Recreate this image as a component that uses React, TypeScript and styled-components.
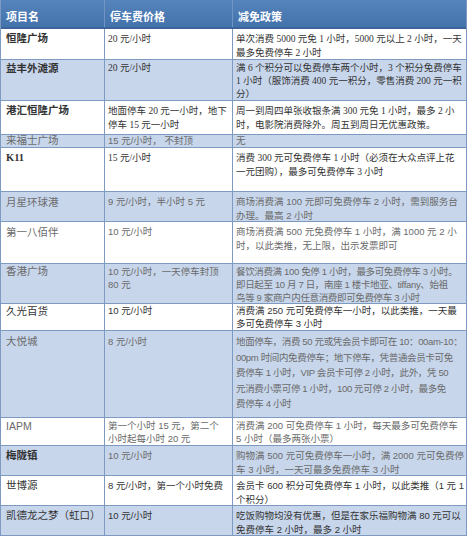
import styled, { createGlobalStyle } from "styled-components"

const GlobalStyle = createGlobalStyle`
  body {
    margin: 0;
    background: #ffffff;
  }
  * {
    box-sizing: border-box;
  }
`

const Table = styled.div`
  width: 467px;
  border-left: 1px solid #7f9ac0;
  border-right: 1px solid #7f9ac0;
  font-size: 9.5px;
  color: #555;
`

const HeaderRow = styled.div`
  display: grid;
  grid-template-columns: 104px 128px 1fr;
  height: 29px;
  background: linear-gradient(#5584bd, #4472ab);
  border-bottom: 2px solid #3c6498;
`

const HeadCell = styled.div`
  padding: 8px 5px 0;
  color: #ffffff;
  font-family: "Noto Sans CJK SC", sans-serif;
  font-weight: 700;
  font-size: 11px;
  border-right: 1px solid #6f95c4;

  &:last-child {
    border-right: none;
  }
`

const Row = styled.div<{ $h: number; $alt: boolean }>`
  display: grid;
  grid-template-columns: 104px 128px 1fr;
  height: ${p => p.$h}px;
  background: ${p => (p.$alt ? "#c7d6eb" : "#ffffff")};
  border-bottom: 1px solid #7f9ac0;
`

const Cell = styled.div<{ $serif: boolean; $lh: number; $dark: boolean; $pt: number; $tight?: boolean }>`
  padding: ${p => p.$pt}px 2px 0 3px;
  overflow: hidden;
  white-space: nowrap;
  line-height: ${p => p.$lh}px;
  letter-spacing: ${p => (p.$tight ? "-0.35px" : "0")};
  color: ${p => (p.$dark ? "#333" : "#6a6a6a")};
  font-family: ${p =>
    p.$serif
      ? `"Liberation Serif", "Noto Sans CJK SC", serif`
      : `"Liberation Sans", "Noto Sans CJK SC", sans-serif`};
  border-right: 1px solid #7f9ac0;

  &:last-child {
    border-right: none;
  }
`

const Name = styled(Cell)<{ $bold: boolean }>`
  padding-left: 5px;
  font-size: 10.5px;
  font-weight: ${p => (p.$bold ? 700 : 400)};
`

interface IPark {
  name: string
  price: string[]
  policy: string[]
  h: number
  serif?: boolean
  bold?: boolean
  dark?: boolean
  tight?: boolean
  lh?: number
  pt?: number
}

const parks: IPark[] = [
  {
    name: "恒隆广场",
    price: ["20 元/小时"],
    policy: ["单次消费 5000 元免 1 小时，5000 元以上 2 小时，一天", "最多免费停车 2 小时"],
    h: 31,
    serif: true,
    bold: true,
    dark: true,
  },
  {
    name: "益丰外滩源",
    price: ["20 元/小时"],
    policy: [
      "满 6 个积分可以免费停车两个小时，3 个积分免费停车",
      "1 小时（服饰消费 400 元一积分，零售消费 200 元一积",
      "分）",
    ],
    h: 41,
    serif: true,
    bold: true,
    dark: true,
    lh: 13,
    pt: 2,
  },
  {
    name: "港汇恒隆广场",
    price: ["地面停车 20 元一小时，地下", "停车 15 元一小时"],
    policy: ["周一到周四单张收银条满 300 元免 1 小时，最多 2 小", "时，电影院消费除外。周五到周日无优惠政策。"],
    h: 34,
    serif: true,
    bold: true,
    dark: true,
  },
  {
    name: "来福士广场",
    price: ["15 元/小时， 不封顶"],
    policy: ["无"],
    h: 13,
    lh: 11,
    pt: 0,
  },
  {
    name: "K11",
    price: ["15 元/小时"],
    policy: ["消费 300 元可免费停车 1 小时（必须在大众点评上花", "一元团购），最多可免费停车 3 小时"],
    h: 44,
    serif: true,
    bold: true,
    dark: true,
  },
  {
    name: "月星环球港",
    price: ["9 元/小时，半小时 5 元"],
    policy: ["商场消费满 100 元即可免费停车 2 小时，需到服务台", "办理。最高 2 小时"],
    h: 30,
  },
  {
    name: "第一八佰伴",
    price: ["10 元/小时"],
    policy: ["商场消费满 500 元免费停车 1 小时，满 1000 元 2 小", "时，以此类推，无上限，出示发票即可"],
    h: 42,
  },
  {
    name: "香港广场",
    price: ["10 元/小时，一天停车封顶", "80 元"],
    policy: [
      "餐饮消费满 100 免停 1 小时，最多可免费停车 3 小时。",
      "即日起至 10 月 7 日，南座 1 楼卡地亚、tiffany、始祖",
      "鸟等 9 家商户内任意消费即可免费停车 3 小时",
    ],
    h: 40,
    lh: 13,
    pt: 1,
    tight: true,
  },
  {
    name: "久光百货",
    price: ["10 元/小时"],
    policy: ["消费满 250 元可免费停车一小时，以此类推，一天最", "多可免费停车 3 小时"],
    h: 27,
    dark: true,
    lh: 12.5,
    pt: 1,
  },
  {
    name: "大悦城",
    price: ["8 元/小时"],
    policy: [
      "地面停车，消费 50 元或凭会员卡即可在 10：00am-10：",
      "00pm 时间内免费停车；地下停车，凭普通会员卡可免",
      "费停车 1 小时，VIP 会员卡可停 2 小时，此外，凭 50",
      "元消费小票可停 1 小时，100 元可停 2 小时，最多免",
      "费停车 4 小时",
    ],
    h: 87,
    lh: 15.5,
    tight: true,
  },
  {
    name: "IAPM",
    price: ["第一个小时 15 元，第二个", "小时起每小时 20 元"],
    policy: ["消费满 200 可免费停车 1 小时，每天最多可免费停车", "5 小时（最多两张小票）"],
    h: 28,
    lh: 12.5,
    pt: 2,
  },
  {
    name: "梅陇镇",
    price: ["10 元/小时"],
    policy: ["购物满 500 元可免费停车一小时，满 2000 元可免费停", "车 3 小时，一天可最多免费停车 3 小时"],
    h: 30,
    bold: true,
    lh: 13.5,
  },
  {
    name: "世博源",
    price: ["8 元/小时，第一个小时免费"],
    policy: ["会员卡 600 积分可免费停车 1 小时，以此类推（1 元 1", "个积分）"],
    h: 30,
    dark: true,
    lh: 13.5,
  },
  {
    name: "凯德龙之梦（虹口）",
    price: ["10 元/小时"],
    policy: ["吃饭购物均没有优惠，但是在家乐福购物满 80 元可以", "免费停车 2 小时，最多 2 小时"],
    h: 30,
    dark: true,
    lh: 13.5,
  },
]

function Lines({ items }: { items: string[] }) {
  return (
    <>
      {items.map((line, i) => (
        <div key={i}>{line}</div>
      ))}
    </>
  )
}

function App() {
  return (
    <>
      <GlobalStyle />
      <Table>
        <HeaderRow>
          <HeadCell>项目名</HeadCell>
          <HeadCell>停车费价格</HeadCell>
          <HeadCell>减免政策</HeadCell>
        </HeaderRow>
        {parks.map((park, i) => {
          const serif = !!park.serif
          const dark = !!park.dark
          const lh = park.lh ?? 14
          const pt = park.pt ?? 3
          return (
            <Row key={park.name} $h={park.h} $alt={i % 2 === 1}>
              <Name $serif={serif} $lh={lh} $pt={pt} $dark={dark || !!park.bold} $bold={!!park.bold}>
                {park.name}
              </Name>
              <Cell $serif={serif} $lh={lh} $pt={pt} $dark={dark}>
                <Lines items={park.price} />
              </Cell>
              <Cell $serif={serif} $lh={lh} $pt={pt} $dark={dark} $tight={park.tight}>
                <Lines items={park.policy} />
              </Cell>
            </Row>
          )
        })}
      </Table>
    </>
  )
}

export default App
